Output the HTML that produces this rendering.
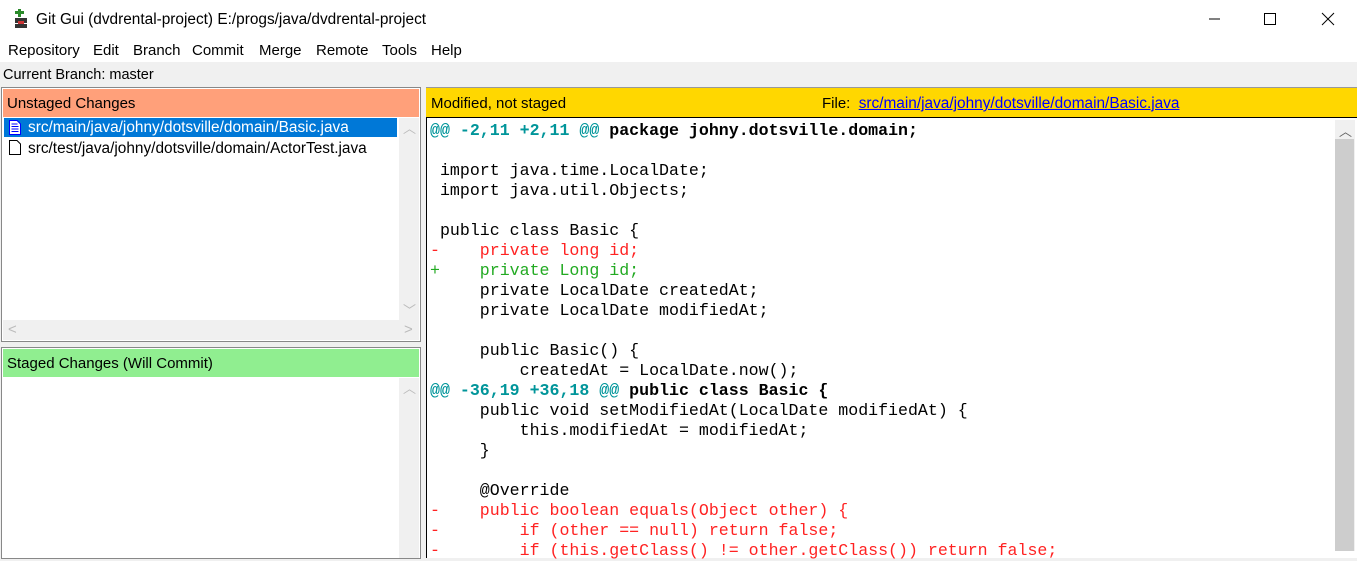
<!DOCTYPE html>
<html><head><style>
body{margin:0;width:1357px;height:551px;background:#f0f0f0;overflow:hidden;position:relative;font-family:"Liberation Sans",Arial,sans-serif;font-size:15px;color:#000}
.abs{position:absolute}
.title{left:0;top:0;width:1357px;height:38px;background:#fff}
.menu{left:0;top:38px;width:1357px;height:24px;background:#fff}
.menu span{position:absolute;top:4px}
.code{font-family:"Liberation Mono","Courier New",monospace;font-size:16.6px;line-height:20px;white-space:pre;}
.hh{color:#00959a;font-weight:bold}
.hb{font-weight:bold}
.r{color:#ff2222}.g{color:#22aa22}
</style></head><body>
<div class="abs title">
 <svg class="abs" style="left:13px;top:9px" width="16" height="20" viewBox="0 0 16 20"><rect x="5" y="0" width="3" height="8" fill="#2a8a2a"/><rect x="2" y="2" width="9" height="3" fill="#2a8a2a"/><rect x="2" y="9" width="12" height="5" fill="#333"/><rect x="2" y="15" width="12" height="4" fill="#333"/><rect x="5" y="12" width="6" height="3" fill="#c33"/></svg>
 <span class="abs" style="left:36px;top:11px;font-size:15.4px">Git Gui (dvdrental-project) E:/progs/java/dvdrental-project</span>
 <svg class="abs" style="left:1209px;top:12px" width="140" height="14"><line x1="0" y1="7" x2="11" y2="7" stroke="#000"/><rect x="55.5" y="1.5" width="11" height="11" fill="none" stroke="#000"/><line x1="113" y1="1" x2="125" y2="13" stroke="#000"/><line x1="125" y1="1" x2="113" y2="13" stroke="#000"/></svg>
</div>
<div class="abs menu">
<span style="left:8px">Repository</span><span style="left:93px">Edit</span><span style="left:133px">Branch</span><span style="left:192px">Commit</span><span style="left:259px">Merge</span><span style="left:316px">Remote</span><span style="left:382px">Tools</span><span style="left:431px">Help</span>
</div>
<span class="abs" style="left:3px;top:67px;font-size:14.5px">Current Branch: master</span>
<div class="abs" style="left:1px;top:87px;width:418px;height:253px;border:1px solid #888;background:#fff"></div>
<div class="abs" style="left:3px;top:89px;width:416px;height:28px;background:#ffa07a"><span class="abs" style="left:4px;top:6px">Unstaged Changes</span></div>
<div class="abs" style="left:4px;top:118px;width:393px;height:19px;background:#0078d7"></div>
<svg class="abs" style="left:9px;top:120px" width="12" height="15"><path d="M0.5 0.5H8L11.5 4V14.5H0.5Z" fill="#fff" stroke="#00f"/><path d="M2.5 4h6M2.5 6.5h7M2.5 9h7M2.5 11.5h7" stroke="#00f"/></svg>
<span class="abs" style="left:28px;top:119px;color:#fff;font-size:15.4px">src/main/java/johny/dotsville/domain/Basic.java</span>
<svg class="abs" style="left:9px;top:140px" width="12" height="15"><path d="M0.5 0.5H8L11.5 4V14.5H0.5Z" fill="#fff" stroke="#000"/></svg>
<span class="abs" style="left:28px;top:140px;font-size:15.4px">src/test/java/johny/dotsville/domain/ActorTest.java</span>
<div class="abs" style="left:399px;top:118px;width:20px;height:202px;background:#f0f0f0"></div>
<span class="abs" style="left:403px;top:118px;color:#bbb;font-size:13px">︿</span>
<span class="abs" style="left:403px;top:300px;color:#bbb;font-size:13px">﹀</span>
<div class="abs" style="left:3px;top:320px;width:416px;height:20px;background:#f0f0f0"></div>
<span class="abs" style="left:8px;top:321px;color:#bbb">&lt;</span><span class="abs" style="left:404px;top:321px;color:#bbb">&gt;</span>
<div class="abs" style="left:1px;top:347px;width:418px;height:210px;border:1px solid #888;background:#fff"></div>
<div class="abs" style="left:3px;top:349px;width:416px;height:28px;background:#90ee90"><span class="abs" style="left:4px;top:6px">Staged Changes (Will Commit)</span></div>
<div class="abs" style="left:399px;top:378px;width:20px;height:180px;background:#f0f0f0"></div>
<span class="abs" style="left:403px;top:378px;color:#bbb;font-size:13px">︿</span>
<div class="abs" style="left:426px;top:87px;width:931px;height:30px;background:#ffd700;border-top:1px solid #999"><span class="abs" style="left:5px;top:7px">Modified, not staged</span><span class="abs" style="left:396px;top:7px">File:&nbsp; <span style="color:#00f;text-decoration:underline;font-size:15.4px">src/main/java/johny/dotsville/domain/Basic.java</span></span></div>
<div class="abs" style="left:426px;top:117px;width:931px;height:440px;background:#fff;border-left:1px solid #000;border-top:1px solid #000"></div>
<div class="abs" style="left:1335px;top:120px;width:20px;height:431px;background:#f0f0f0"></div>
<div class="abs" style="left:1335px;top:139px;width:19px;height:412px;background:#cdcdcd"></div>
<span class="abs" style="left:1339px;top:121px;color:#606060;font-size:13px">︿</span>
<div class="abs code" style="left:430px;top:121px"><span class="hh">@@ -2,11 +2,11 @@</span><span class="hb"> package johny.dotsville.domain;</span>

 import java.time.LocalDate;
 import java.util.Objects;

 public class Basic {
<span class="r">-    private long id;</span>
<span class="g">+    private Long id;</span>
     private LocalDate createdAt;
     private LocalDate modifiedAt;

     public Basic() {
         createdAt = LocalDate.now();
<span class="hh">@@ -36,19 +36,18 @@</span><span class="hb"> public class Basic {</span>
     public void setModifiedAt(LocalDate modifiedAt) {
         this.modifiedAt = modifiedAt;
     }

     @Override
<span class="r">-    public boolean equals(Object other) {</span>
<span class="r">-        if (other == null) return false;</span>
<span class="r">-        if (this.getClass() != other.getClass()) return false;</span>
</div>
</body></html>
